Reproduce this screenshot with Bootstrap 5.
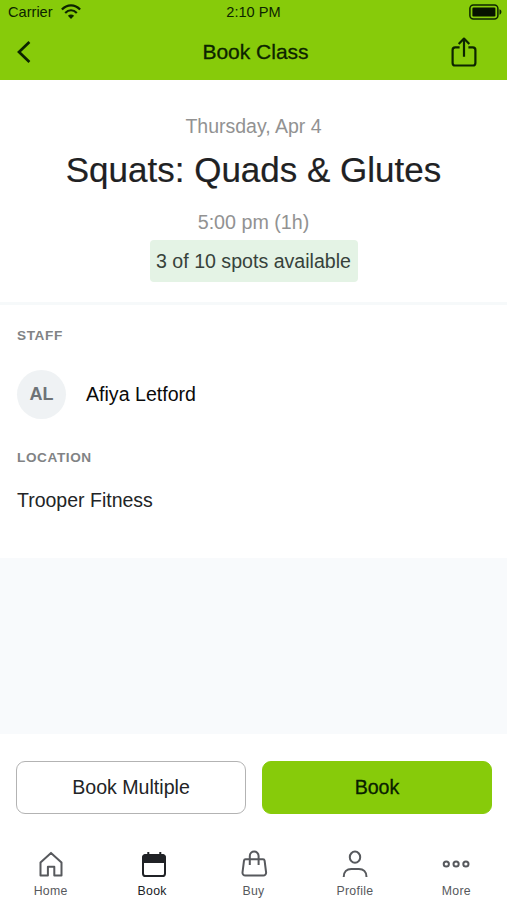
<!DOCTYPE html>
<html lang="en">
<head>
<meta charset="utf-8">
<meta name="viewport" content="width=device-width, initial-scale=1">
<title>Book Class</title>
<link href="https://cdn.jsdelivr.net/npm/bootstrap@5.3.0/dist/css/bootstrap.min.css" rel="stylesheet">
<style>
  body { font-family: "Liberation Sans", Arial, sans-serif; font-size: 19.7px; color: #222426; background: #f8fafc; overflow: hidden; }
  svg { display: block; flex: none; overflow: visible; }
  .app { height: 900px; }
  .app-header { height: 80px; background: #87cb0a; color: #0c2400; }
  .status-row { height: 24px; padding: 0 5px 0 8px; font-size: 14.6px; line-height: 24px; }
  .status-row .clock { margin: 0 3px 0 0; }
  .title-row { height: 56px; padding: 0 30px 0 16px; }
  .title-row h1 { font-size: 21px; font-weight: 400; line-height: 56px; padding-left: 18px; -webkit-text-stroke: .3px; }
  .side { flex: 1 1 0; }
  .summary { height: 225px; padding-top: 30px; border-bottom: 3px solid #f6f9fa; }
  .when { color: #929292; line-height: 32px; }
  .date-line { font-size: 19.5px; }
  .class-name { font-size: 35px; font-weight: 400; line-height: 56px; color: #202123; -webkit-text-stroke: .2px; }
  .time-line { line-height: 42px; padding-top: 3px; }
  .spots { height: 42px; line-height: 42px; width: 208px; margin-top: -3px; background: #e4f3e5; color: #37423b; border-radius: 4px; font-size: 19.6px; }
  .details { height: 253px; padding: 21px 17px 0; }
  .label { font-size: 13.6px; font-weight: 700; letter-spacing: .6px; line-height: 20px; color: #818385; }
  .avatar { width: 49px; height: 49px; background: #eff2f4; color: #6e7377; font-size: 18px; font-weight: 700; }
  .staff-row { margin-top: 24px; gap: 20px; color: #0a0a0a; font-size: 19.6px; }
  .place-label { margin-top: 29px; }
  .place { line-height: 30px; margin-top: 17px; font-size: 19.5px; }
  .bottom { height: 166px; padding-top: 27px; }
  .action-row { gap: 16px; padding: 0 15px 0 16px; }
  .btn.action { height: 53px; font-size: 19.6px; border-radius: 9px; padding: 0; color: #222426; border: 1.5px solid #b3b3b3; }
  .btn.action.go { background: #87cb0a; border-color: #87cb0a; color: #082000; -webkit-text-stroke: .3px; }
  .tabs { margin-top: 34px; }
  .tab { color: #57595d; font-size: 12.3px; letter-spacing: .3px; line-height: 18px; text-decoration: none; }
  .tab svg { margin-bottom: 2px; }
  .tab.active { color: #202226; }
</style>
</head>
<body>
<div class="app d-flex flex-column">
  <header class="app-header">
    <div class="status-row d-flex align-items-center">
      <div class="side d-flex align-items-center">
        <span>Carrier</span>
        <svg class="ms-2" width="20" height="16" viewBox="0 0 20 16" fill="none" stroke="currentColor" stroke-width="2.2"><path d="M.9 5.6C6-.1 14-.1 19.1 5.6M4.2 9c3.5-3.4 8.1-3.4 11.6 0"/><path d="M10 14.9 6.9 11.8c1.8-1.6 4.4-1.6 6.2 0z" fill="currentColor" stroke="none"/></svg>
      </div>
      <span class="clock">2:10 PM</span>
      <div class="side d-flex justify-content-end">
        <svg width="33" height="16" viewBox="0 0 33 16"><rect x=".9" y="1" width="28" height="14" rx="3.5" fill="none" stroke="currentColor" stroke-width="1.5"/><rect x="3.4" y="3.5" width="23" height="9" rx="1.2" fill="#071300"/><path d="M30.5 5.3c2.6.9 2.6 4.5 0 5.4z" fill="currentColor"/></svg>
      </div>
    </div>
    <div class="title-row d-flex align-items-center">
      <div class="side"><svg width="16" height="24" viewBox="0 0 16 24" fill="none" stroke="currentColor" stroke-width="2.7"><path d="M13.4 2 3 12l10.4 10"/></svg></div>
      <h1 class="m-0">Book Class</h1>
      <div class="side d-flex justify-content-end"><svg width="26" height="32" viewBox="0 0 26 32" fill="none" stroke="currentColor" stroke-width="2.2" stroke-linejoin="round"><path d="M8.6 11.3H4.2a2.6 2.6 0 0 0-2.6 2.6v13a2.6 2.6 0 0 0 2.6 2.6h17.6a2.6 2.6 0 0 0 2.6-2.6v-13a2.6 2.6 0 0 0-2.6-2.6h-4.4M13 20.8V2.6M7.7 8 13 2.6 18.3 8"/></svg></div>
    </div>
  </header>

  <section class="summary bg-white d-flex flex-column align-items-center">
    <div class="when date-line">Thursday, Apr 4</div>
    <h2 class="class-name m-0">Squats: Quads &amp; Glutes</h2>
    <div class="when time-line">5:00 pm (1h)</div>
    <div class="spots text-center">3 of 10 spots available</div>
  </section>

  <section class="details bg-white">
    <div class="label">STAFF</div>
    <div class="staff-row d-flex align-items-center">
      <div class="avatar rounded-circle d-flex align-items-center justify-content-center">AL</div>
      <span>Afiya Letford</span>
    </div>
    <div class="label place-label">LOCATION</div>
    <div class="place">Trooper Fitness</div>
  </section>

  <footer class="bottom bg-white mt-auto">
    <div class="action-row d-flex">
      <button type="button" class="btn action flex-fill w-50">Book Multiple</button>
      <button type="button" class="btn action go flex-fill w-50">Book</button>
    </div>
    <nav class="tabs d-flex">
      <a class="tab side d-flex flex-column align-items-center" href="#">
        <svg width="28" height="32" viewBox="0 0 28 32" fill="none" stroke="currentColor" stroke-width="2" stroke-linejoin="round"><path d="M3.5 14.4 14 4.9l10.5 9.5v13.1h-7.2v-8.8h-6.4v8.8H3.5z"/></svg>
        Home
      </a>
      <a class="tab active side d-flex flex-column align-items-center" href="#">
        <svg width="28" height="32" viewBox="0 0 28 32" fill="none" stroke="currentColor" stroke-width="2"><rect x="5" y="7" width="22" height="21" rx="2.6"/><path d="M5 14.2V9.4A2.4 2.4 0 0 1 7.4 7h17.2A2.4 2.4 0 0 1 27 9.4v4.8z" fill="currentColor" stroke-width="1.4"/><path d="M10.3 4v4M22.3 4v4"/></svg>
        Book
      </a>
      <a class="tab side d-flex flex-column align-items-center" href="#">
        <svg width="28" height="32" viewBox="0 0 28 32" fill="none" stroke="currentColor" stroke-width="2" stroke-linejoin="round"><path d="M5.6 11.2h17.4a1.6 1.6 0 0 1 1.6 1.4l1.5 11.9a2.8 2.8 0 0 1-2.8 3.1H5.3a2.8 2.8 0 0 1-2.8-3.1L4 12.6a1.6 1.6 0 0 1 1.6-1.4z"/><path d="M9.8 17V8.1c0-6 8.8-6 8.8 0V17"/></svg>
        Buy
      </a>
      <a class="tab side d-flex flex-column align-items-center" href="#">
        <svg width="28" height="32" viewBox="0 0 28 32" fill="none" stroke="currentColor" stroke-width="2"><ellipse cx="14" cy="9.2" rx="5.2" ry="5.6"/><path d="M2.7 28.9c0-5 3.2-7.9 7.6-7.9h7.6c4.4 0 7.6 2.9 7.6 7.9"/></svg>
        Profile
      </a>
      <a class="tab side d-flex flex-column align-items-center" href="#">
        <svg width="28" height="32" viewBox="0 0 28 32" fill="none" stroke="currentColor" stroke-width="2"><circle cx="4.3" cy="16" r="2.6"/><circle cx="14.1" cy="16" r="2.6"/><circle cx="23.9" cy="16" r="2.6"/></svg>
        More
      </a>
    </nav>
  </footer>
</div>
<script src="https://cdn.jsdelivr.net/npm/bootstrap@5.3.0/dist/js/bootstrap.bundle.min.js"></script>
</body>
</html>
